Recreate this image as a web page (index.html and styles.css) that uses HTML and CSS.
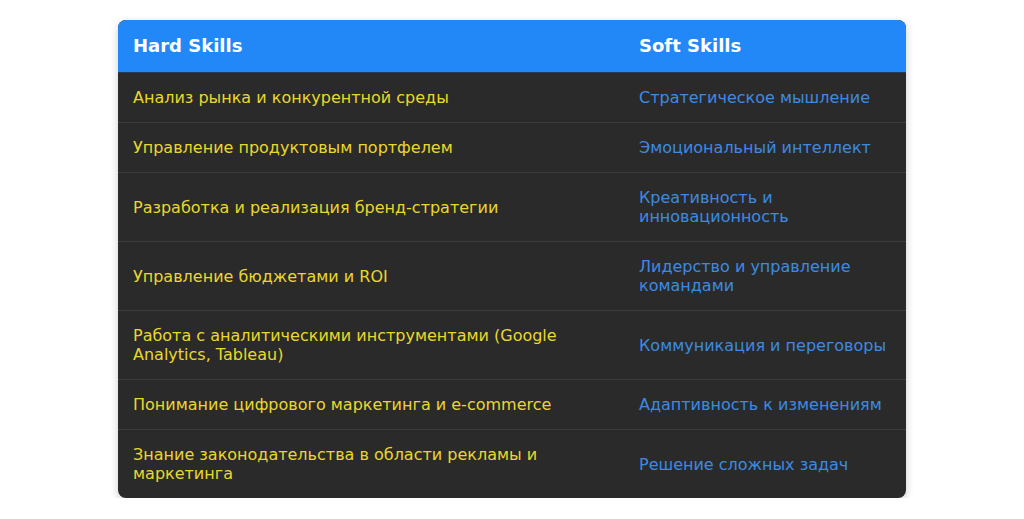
FILE: index.html
```html
<!DOCTYPE html>
<html lang="ru">
<head>
<meta charset="utf-8">
<link rel="stylesheet" href="styles.css">
</head>
<body>
<div class="wrap">
<table class="skills">
<thead>
<tr><th class="c1">Hard Skills</th><th class="c2">Soft Skills</th></tr>
</thead>
<tbody>
<tr><td class="hard">Анализ рынка и конкурентной среды</td><td class="soft">Стратегическое мышление</td></tr>
<tr><td class="hard">Управление продуктовым портфелем</td><td class="soft">Эмоциональный интеллект</td></tr>
<tr><td class="hard">Разработка и реализация бренд-стратегии</td><td class="soft">Креативность и инновационность</td></tr>
<tr><td class="hard">Управление бюджетами и ROI</td><td class="soft">Лидерство и управление командами</td></tr>
<tr><td class="hard">Работа с аналитическими инструментами (Google Analytics, Tableau)</td><td class="soft">Коммуникация и переговоры</td></tr>
<tr><td class="hard">Понимание цифрового маркетинга и e-commerce</td><td class="soft">Адаптивность к изменениям</td></tr>
<tr><td class="hard">Знание законодательства в области рекламы и маркетинга</td><td class="soft">Решение сложных задач</td></tr>
</tbody>
</table>
</div>
</body>
</html>
```
FILE: styles.css
```css
html, body {
  margin: 0;
  padding: 0;
  background: #ffffff;
  font-family: "DejaVu Sans", sans-serif;
}
.wrap {
  padding-top: 20px;
  display: flex;
  justify-content: center;
}
.skills {
  width: 788px;
  border-collapse: separate;
  border-spacing: 0;
  border-radius: 8px;
  overflow: hidden;
  background: #2a2a2a;
  box-shadow: 0 3px 8px rgba(0, 0, 0, 0.2);
  table-layout: fixed;
}
.skills th {
  background: #2388f7;
  color: #ffffff;
  font-weight: bold;
  font-size: 18px;
  line-height: 22px;
  text-align: left;
  padding: 15px 15px;
}
.c1 { width: 476px; }
.skills td {
  font-size: 16px;
  line-height: 19px;
  padding: 15px 15px;
  border-top: 1px solid #3d3d3d;
  vertical-align: middle;
}
.skills tbody tr:first-child td { border-top-color: #1f3d5e; }
.hard { color: #e9d82c; }
.soft { color: #3d8ae2; }
```
